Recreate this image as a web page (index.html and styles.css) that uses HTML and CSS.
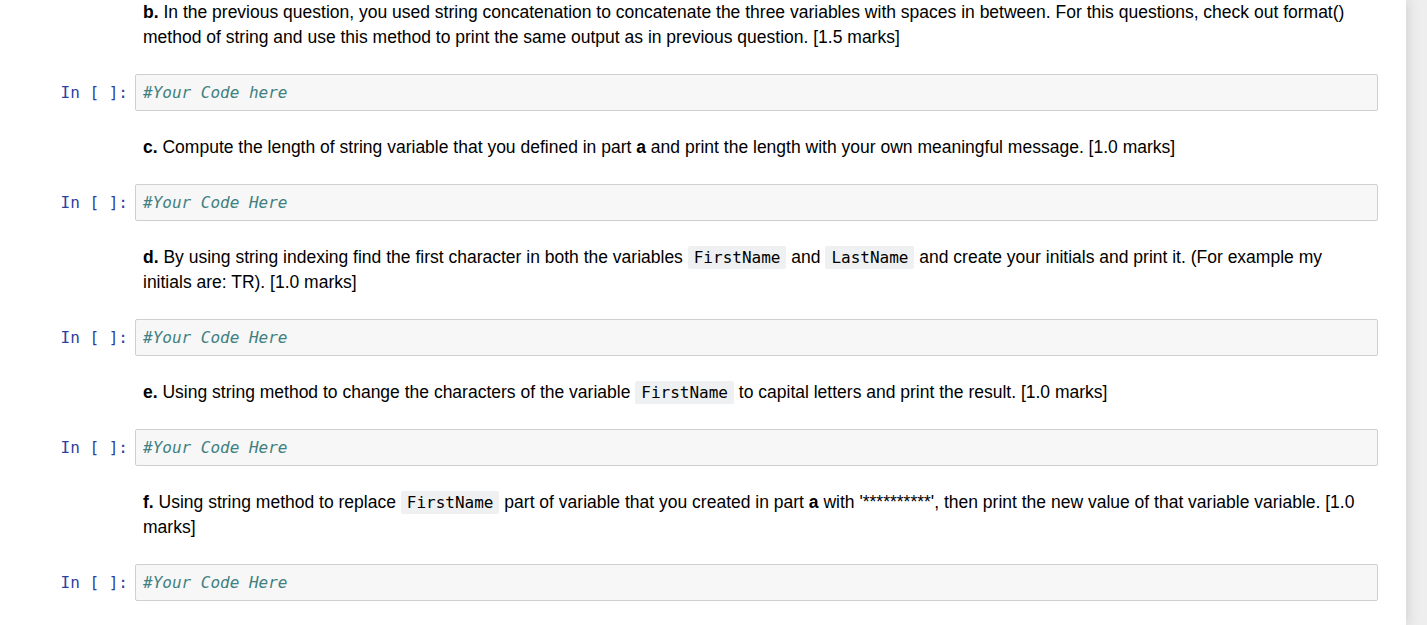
FILE: index.html
```html
<!DOCTYPE html>
<html>
<head>
<meta charset="utf-8">
<link rel="stylesheet" href="styles.css">
</head>
<body>
<div class="notebook">
  <div class="cell md first">
    <div class="prompt"></div>
    <div class="md-text"><b>b.</b> In the previous question, you used string concatenation to concatenate the three variables with spaces in between. For this questions, check out format() method of string and use this method to print the same output as in previous question. [1.5 marks]</div>
  </div>
  <div class="cell code">
    <div class="prompt">In [ ]:</div>
    <div class="input"><span class="cm">#Your Code here</span></div>
  </div>
  <div class="cell md">
    <div class="prompt"></div>
    <div class="md-text"><b>c.</b> Compute the length of string variable that you defined in part <b>a</b> and print the length with your own meaningful message. [1.0 marks]</div>
  </div>
  <div class="cell code">
    <div class="prompt">In [ ]:</div>
    <div class="input"><span class="cm">#Your Code Here</span></div>
  </div>
  <div class="cell md">
    <div class="prompt"></div>
    <div class="md-text"><b>d.</b> By using string indexing find the first character in both the variables <code>FirstName</code> and <code>LastName</code> and create your initials and print it. (For example my initials are: TR). [1.0 marks]</div>
  </div>
  <div class="cell code">
    <div class="prompt">In [ ]:</div>
    <div class="input"><span class="cm">#Your Code Here</span></div>
  </div>
  <div class="cell md">
    <div class="prompt"></div>
    <div class="md-text"><b>e.</b> Using string method to change the characters of the variable <code>FirstName</code> to capital letters and print the result. [1.0 marks]</div>
  </div>
  <div class="cell code">
    <div class="prompt">In [ ]:</div>
    <div class="input"><span class="cm">#Your Code Here</span></div>
  </div>
  <div class="cell md">
    <div class="prompt"></div>
    <div class="md-text"><b>f.</b> Using string method to replace <code>FirstName</code> part of variable that you created in part <b>a</b> with '**********', then print the new value of that variable variable. [1.0 marks]</div>
  </div>
  <div class="cell code">
    <div class="prompt">In [ ]:</div>
    <div class="input"><span class="cm">#Your Code Here</span></div>
  </div>
</div>
</body>
</html>
```

FILE: styles.css
```css
html, body {
  margin: 0;
  padding: 0;
  height: 100%;
  overflow: hidden;
}
body {
  background: #eeeeee;
}
.notebook {
  width: 1406px;
  min-height: 100%;
  background: #ffffff;
  box-shadow: 0 0 12px 1px rgba(87, 87, 87, 0.2);
  display: flex;
  flex-direction: column;
  font-family: "Liberation Sans", Arial, sans-serif;
  font-size: 17.5px;
  color: #000;
}
.cell {
  display: flex;
  align-items: flex-start;
  padding-right: 28px;
}
.prompt {
  width: 135px;
  flex: 0 0 135px;
  box-sizing: border-box;
  padding-right: 7px;
  text-align: right;
  font-family: "DejaVu Sans Mono", monospace;
  font-size: 16px;
  line-height: 21px;
  color: #303F9F;
}
.code .prompt {
  padding-top: 8px;
}
.md {
  padding-top: 24px;
  padding-bottom: 24px;
}
.md.first {
  padding-top: 0;
}
.md-text {
  flex: 1 1 0;
  min-width: 0;
  padding: 0 14px 0 8px;
  line-height: 25px;
}
.input {
  flex: 1;
  height: 37px;
  box-sizing: border-box;
  background: #f7f7f7;
  border: 1px solid #cfcfcf;
  border-radius: 2px;
  padding: 7px 7px;
  font-family: "DejaVu Sans Mono", monospace;
  font-size: 16px;
  line-height: 21px;
}
.cm {
  color: #408080;
  font-style: italic;
}
code {
  font-family: "DejaVu Sans Mono", monospace;
  font-size: 16px;
  background: #eff0f1;
  padding: 2px 6px;
  border-radius: 2px;
  color: #000;
}
```
